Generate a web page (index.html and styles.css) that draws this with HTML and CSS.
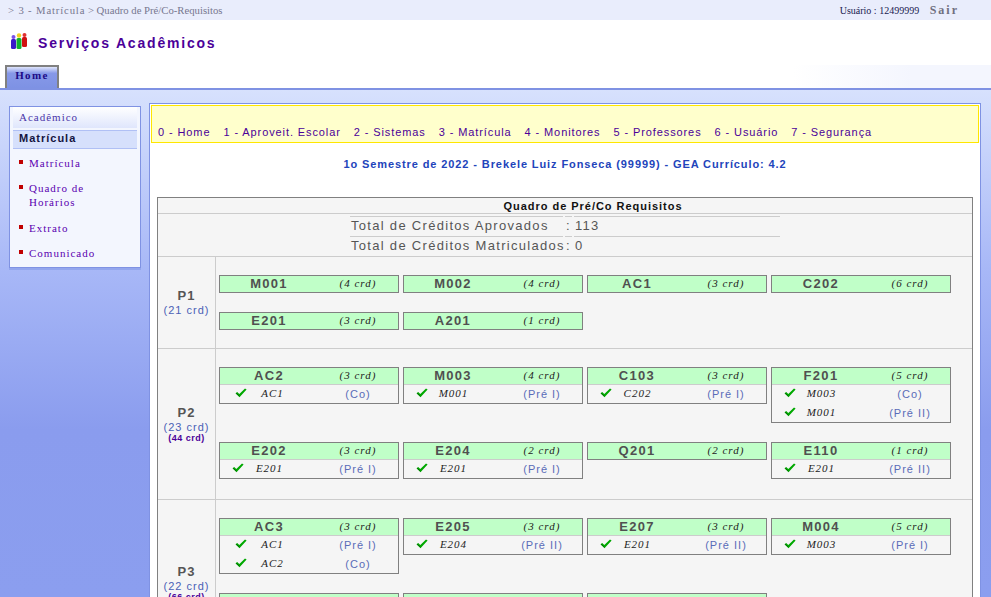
FILE: index.html
```html
<!DOCTYPE html>
<html lang="pt-BR">
<head>
    <meta charset="UTF-8">
    <meta name="viewport" content="width=device-width, initial-scale=1.0">
    <title>Quadro de Pré/Co-Requisitos</title>
    <link rel="stylesheet" href="styles.css">
</head>
<body>
<svg class="defs" width="0" height="0">
    <symbol id="check" viewBox="0 0 12 10">
        <path d="M0.5 5.2 L2.2 3.9 L4.3 6 L10 0.6 L11.6 1.4 L4.5 9.2 Z" fill="#00a800"/>
        <path d="M1 5.2 L4.4 8.2" stroke="#006400" stroke-width="0.8" fill="none"/>
    </symbol>
</svg>
<div class="page">
    <div class="topbar">
        <div class="crumb"><span class="crumb-wide">&gt; 3 - Matrícula</span> &gt; Quadro de Pré/Co-Requisitos</div>
        <div class="user">Usuário : 12499999 <a class="sair" href="#">Sair</a></div>
    </div>

    <div class="brand">
        <svg class="logo" width="16" height="16" viewBox="0 0 16 16">
            <rect x="0" y="6" width="5" height="10" rx="1.5" fill="#3a18c8"/>
            <circle cx="2.5" cy="4" r="2" fill="#7a50e8"/>
            <rect x="11" y="4" width="5" height="10" rx="1.5" fill="#d01010"/>
            <circle cx="13.5" cy="2" r="2" fill="#e03030"/>
            <rect x="5.5" y="5" width="5" height="11" rx="1.5" fill="#10b030"/>
            <circle cx="8" cy="2.5" r="2.2" fill="#f0d020"/>
        </svg>
        <h1>Serviços Acadêmicos</h1>
    </div>

    <div class="tabs">
        <a class="tab" href="#">Home</a>
    </div>

    <div class="content">
        <aside class="side">
            <div class="side-title">Acadêmico</div>
            <div class="side-sub">Matrícula</div>
            <ul class="side-list">
                <li>Matrícula</li>
                <li>Quadro de Horários</li>
                <li>Extrato</li>
                <li>Comunicado</li>
            </ul>
        </aside>

        <main class="panel">
            <nav class="menu">
                <a href="#">0 - Home</a>
                <a href="#">1 - Aproveit. Escolar</a>
                <a href="#">2 - Sistemas</a>
                <a href="#">3 - Matrícula</a>
                <a href="#">4 - Monitores</a>
                <a href="#">5 - Professores</a>
                <a href="#">6 - Usuário</a>
                <a href="#">7 - Segurança</a>
            </nav>

            <div class="student">1o Semestre de 2022 - Brekele Luiz Fonseca (99999) - GEA Currículo: 4.2</div>

            <section class="board">
                <div class="board-title">Quadro de Pré/Co Requisitos</div>
                <div class="totals">
                    <div class="total-cell">Total de Créditos Aprovados</div>
                    <div class="total-cell">:</div>
                    <div class="total-cell">113</div>
                    <div class="total-cell">Total de Créditos Matriculados</div>
                    <div class="total-cell">:</div>
                    <div class="total-cell">0</div>
                </div>

                <div class="period">
                    <div class="period-name"><b>P1</b><span>(21 crd)</span></div>
                    <div class="cards">
                        <div class="card"><div class="card-head"><b>M001</b><i>(4 crd)</i></div></div>
                        <div class="card"><div class="card-head"><b>M002</b><i>(4 crd)</i></div></div>
                        <div class="card"><div class="card-head"><b>AC1</b><i>(3 crd)</i></div></div>
                        <div class="card"><div class="card-head"><b>C202</b><i>(6 crd)</i></div></div>
                        <div class="card"><div class="card-head"><b>E201</b><i>(3 crd)</i></div></div>
                        <div class="card"><div class="card-head"><b>A201</b><i>(1 crd)</i></div></div>
                    </div>
                </div>

                <div class="period">
                    <div class="period-name"><b>P2</b><span>(23 crd)</span><small>(44 crd)</small></div>
                    <div class="cards cards-tall">
                        <div class="card">
                            <div class="card-head"><b>AC2</b><i>(3 crd)</i></div>
                            <div class="req req-short"><svg><use href="#check"/></svg><i>AC1</i><span>(Co)</span></div>
                        </div>
                        <div class="card">
                            <div class="card-head"><b>M003</b><i>(4 crd)</i></div>
                            <div class="req"><svg><use href="#check"/></svg><i>M001</i><span>(Pré I)</span></div>
                        </div>
                        <div class="card">
                            <div class="card-head"><b>C103</b><i>(3 crd)</i></div>
                            <div class="req"><svg><use href="#check"/></svg><i>C202</i><span>(Pré I)</span></div>
                        </div>
                        <div class="card">
                            <div class="card-head"><b>F201</b><i>(5 crd)</i></div>
                            <div class="req"><svg><use href="#check"/></svg><i>M003</i><span>(Co)</span></div>
                            <div class="req"><svg><use href="#check"/></svg><i>M001</i><span>(Pré II)</span></div>
                        </div>
                        <div class="card">
                            <div class="card-head"><b>E202</b><i>(3 crd)</i></div>
                            <div class="req"><svg><use href="#check"/></svg><i>E201</i><span>(Pré I)</span></div>
                        </div>
                        <div class="card">
                            <div class="card-head"><b>E204</b><i>(2 crd)</i></div>
                            <div class="req"><svg><use href="#check"/></svg><i>E201</i><span>(Pré I)</span></div>
                        </div>
                        <div class="card">
                            <div class="card-head"><b>Q201</b><i>(2 crd)</i></div>
                        </div>
                        <div class="card">
                            <div class="card-head"><b>E110</b><i>(1 crd)</i></div>
                            <div class="req"><svg><use href="#check"/></svg><i>E201</i><span>(Pré II)</span></div>
                        </div>
                    </div>
                </div>

                <div class="period period-long">
                    <div class="period-name"><b>P3</b><span>(22 crd)</span><small>(66 crd)</small></div>
                    <div class="cards">
                        <div class="card">
                            <div class="card-head"><b>AC3</b><i>(3 crd)</i></div>
                            <div class="req req-short"><svg><use href="#check"/></svg><i>AC1</i><span>(Pré I)</span></div>
                            <div class="req req-short"><svg><use href="#check"/></svg><i>AC2</i><span>(Co)</span></div>
                        </div>
                        <div class="card">
                            <div class="card-head"><b>E205</b><i>(3 crd)</i></div>
                            <div class="req"><svg><use href="#check"/></svg><i>E204</i><span>(Pré II)</span></div>
                        </div>
                        <div class="card">
                            <div class="card-head"><b>E207</b><i>(3 crd)</i></div>
                            <div class="req"><svg><use href="#check"/></svg><i>E201</i><span>(Pré II)</span></div>
                        </div>
                        <div class="card">
                            <div class="card-head"><b>M004</b><i>(5 crd)</i></div>
                            <div class="req"><svg><use href="#check"/></svg><i>M003</i><span>(Pré I)</span></div>
                        </div>
                        <div class="card"><div class="card-head"></div></div>
                        <div class="card"><div class="card-head"></div></div>
                        <div class="card"><div class="card-head"></div></div>
                    </div>
                </div>
            </section>
        </main>
    </div>
</div>
</body>
</html>
```

FILE: styles.css
```css
html, body {
    margin: 0;
    padding: 0;
    height: 100%;
    overflow: hidden;
}
body {
    font-family: "Liberation Sans", Arial, sans-serif;
    font-size: 11px;
    background: #fff;
}
.defs {
    position: absolute;
}
.page {
    height: 597px;
    overflow: hidden;
    display: flex;
    flex-direction: column;
}

/* top bar */
.topbar {
    height: 20px;
    flex-shrink: 0;
    background: #e9edfc;
    display: flex;
    justify-content: space-between;
    align-items: center;
    font-family: "Liberation Serif", serif;
    font-size: 10px;
}
.crumb {
    padding-left: 8px;
    font-size: 10.7px;
    color: #77778f;
}
.crumb-wide {
    letter-spacing: 0.85px;
}
.user {
    color: #1a1a50;
    padding-right: 32px;
}
.sair {
    margin-left: 8px;
    font-size: 12px;
    font-weight: bold;
    letter-spacing: 2px;
    color: #707080;
    text-decoration: none;
}

/* brand + tabs */
.brand {
    height: 45px;
    flex-shrink: 0;
    display: flex;
    align-items: center;
    padding-left: 11px;
    box-sizing: border-box;
}
.logo {
    margin-right: 11px;
    margin-top: -3px;
}
h1 {
    margin: 0;
    font-size: 14px;
    letter-spacing: 1.8px;
    color: #4b0099;
}
.tabs {
    height: 23px;
    flex-shrink: 0;
    padding-left: 5px;
    background: linear-gradient(to right, #fff 80%, #f4f6fe 92%);
    display: flex;
}
.tab {
    width: 50px;
    border: 2px solid #808080;
    border-bottom: 0;
    background: linear-gradient(#dfe5fb, #8698e8 30%, #7e92e4);
    font-family: "Liberation Serif", serif;
    font-size: 11px;
    font-weight: bold;
    letter-spacing: 1.4px;
    color: #1c0a86;
    text-decoration: none;
    text-align: center;
    line-height: 16px;
}

/* page body */
.content {
    flex: 1;
    min-height: 0;
    display: flex;
    align-items: flex-start;
    gap: 8px;
    padding: 13px 10px 0 9px;
    border-top: 2px solid #7f92e3;
    background: linear-gradient(#d7e1fd, #a8b8f7 35%, #8a9cee 67%, #8b9eef);
}

/* sidebar */
.side {
    width: 130px;
    flex-shrink: 0;
    margin-top: 3px;
    border: 1px solid #7f92e3;
    box-shadow: 0 2px 0 #93a6ee;
    background: #f3f6fe;
    font-family: "Liberation Serif", serif;
    letter-spacing: 1px;
    color: #5a00b0;
}
.side-title {
    margin: 0 3px;
    height: 21px;
    line-height: 21px;
    padding-left: 6px;
    background: linear-gradient(#fff, #dfe6fc);
    color: #4a35a8;
}
.side-sub {
    margin: 2px 3px 0 3px;
    height: 19px;
    line-height: 15px;
    padding-left: 6px;
    box-sizing: border-box;
    background: #d6e0fc;
    border-top: 1px solid #b0c0f5;
    border-bottom: 1px solid #b0c0f5;
    font-family: "Liberation Sans", sans-serif;
    font-weight: bold;
    color: #141440;
}
.side-list {
    list-style: none;
    margin: 0;
    padding: 7px 18px 0 19px;
}
.side-list li {
    position: relative;
    line-height: 14px;
    padding-bottom: 11.25px;
}
.side-list li:last-child {
    padding-bottom: 7px;
}
.side-list li::before {
    content: "";
    position: absolute;
    left: -10px;
    top: 4px;
    width: 4px;
    height: 4px;
    background: #c00000;
}

/* main panel */
.panel {
    width: 828px;
    height: 600px;
    flex-shrink: 0;
    padding: 1px;
    border: 1px solid #7f92e3;
    background: #fff;
}
.menu {
    height: 33px;
    border: 1px solid #ffe600;
    background: #ffffcc;
    display: flex;
    align-items: flex-end;
    gap: 13px;
    padding-left: 6px;
    padding-bottom: 3px;
}
.menu a {
    color: #4b0099;
    text-decoration: none;
    letter-spacing: 0.9px;
    line-height: 14px;
}
.student {
    margin-top: 14px;
    text-align: center;
    font-weight: bold;
    letter-spacing: 0.9px;
    line-height: 14px;
    color: #2244bb;
}

/* board */
.board {
    margin: 26px 6px 0 6px;
    border: 1px solid #808080;
    background: #f5f5f5;
    color: #555;
}
.board-title {
    height: 15px;
    line-height: 16px;
    padding-left: 56px;
    text-align: center;
    font-weight: bold;
    letter-spacing: 0.97px;
    color: #111;
    border-bottom: 1px solid #ccc;
}
.totals {
    height: 40px;
    padding-top: 2px;
    display: grid;
    grid-template-columns: 213px 7px 206px;
    grid-auto-rows: 20px;
    column-gap: 2px;
    justify-content: center;
    font-size: 13px;
    letter-spacing: 1.3px;
    line-height: 18px;
    color: #555;
}
.total-cell {
    border-top: 1px solid #ccc;
    padding-left: 1px;
    white-space: nowrap;
}
.period {
    display: flex;
    border-top: 1px solid #ccc;
}
.period-long {
    min-height: 166px;
}
.period-name {
    width: 57px;
    flex-shrink: 0;
    border-right: 1px solid #ccc;
    display: flex;
    flex-direction: column;
    align-items: center;
    justify-content: center;
    letter-spacing: 1px;
    color: #4a5fb5;
}
.period-name b {
    font-size: 13px;
    line-height: 15px;
    color: #555;
}
.period-name span {
    line-height: 14px;
}
.period-name small {
    font-size: 9px;
    font-weight: bold;
    line-height: 9px;
    color: #4b0099;
    letter-spacing: 0.5px;
}
.cards {
    flex: 1;
    display: grid;
    grid-template-columns: repeat(4, 180px);
    column-gap: 4px;
    row-gap: 19px;
    align-content: start;
    align-items: start;
    padding: 18px 3px 18px 3px;
}
.cards-tall {
    padding-bottom: 20px;
}
.card {
    border: 1px solid #808080;
}
.card-head {
    height: 16px;
    background: #c0ffc8;
    display: grid;
    grid-template-columns: 98px 80px;
    align-items: center;
    text-align: center;
}
.card-head b {
    font-size: 13px;
    letter-spacing: 1.3px;
    line-height: 16px;
    color: #505050;
}
.card-head i, .req i {
    font-family: "Liberation Serif", serif;
    font-style: italic;
    font-size: 11px;
    letter-spacing: 1px;
    color: #222;
}
.card-head i {
    margin-top: -2px;
}
.req {
    display: grid;
    grid-template-columns: 33px 33px 1fr;
    align-items: center;
    text-align: center;
    height: 18px;
    margin-bottom: 1px;
}
.card-head + .req {
    border-top: 1px solid #ccc;
}
.req:last-child {
    margin-bottom: 0;
}
.req-short svg, .req-short i {
    transform: translateX(3px);
}
.req svg {
    width: 12px;
    height: 10px;
    justify-self: end;
    margin-right: 9px;
    margin-top: -3px;
}
.req i {
    margin-top: -2px;
}
.req span {
    padding-left: 32px;
    letter-spacing: 1px;
    color: #5a6cb8;
}
```
